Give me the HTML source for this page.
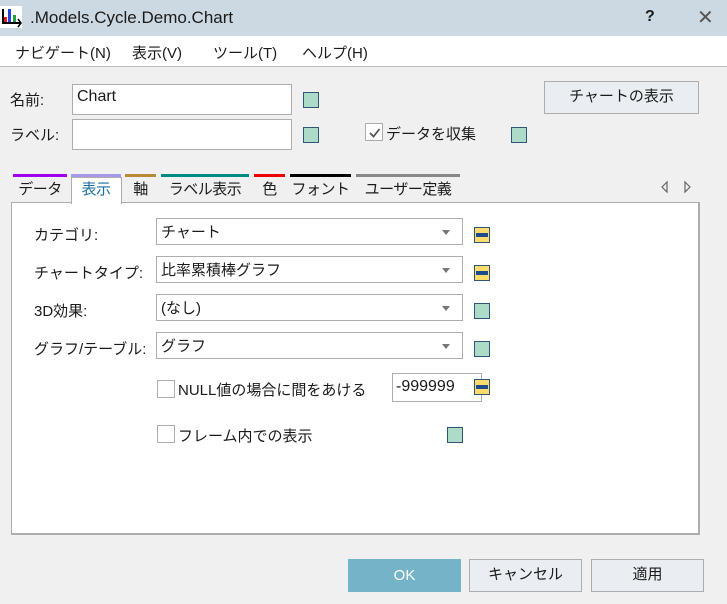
<!DOCTYPE html>
<html><head><meta charset="utf-8"><style>
*{margin:0;padding:0;box-sizing:border-box}
body{width:727px;height:604px;background:#f0f0f0;font-family:"Liberation Sans","Noto Sans CJK JP",sans-serif;font-size:15px;color:#1a1a1a;position:relative;overflow:hidden;white-space:nowrap}
.a{position:absolute}
.title{left:0;top:0;width:727px;height:36px;background:#cdd9e2}
.menu{left:0;top:36px;width:727px;height:31px;background:#fff;border-bottom:1px solid #bdbdbd}
.inp{background:#fff;border:1px solid #adadad}
.sq{width:16px;height:16px;background:#acdcc8;border:1px solid #2d5678}
.ysq{width:16px;height:16px;background:#fedc6c;border:1px solid #2d5678}
.ysq:after{content:"";position:absolute;left:1px;top:5px;width:12px;height:4px;background:#1f4a8c}
.cb{width:18px;height:18px;background:#fff;border:1px solid #adadad}
.btn{background:#eaeef2;border:1px solid #adadad;text-align:center;line-height:30px}
.combo{background:#fff;border:1px solid #adadad;height:27px;width:307px;left:156px;padding-left:4px;line-height:27px}
.combo:after{content:"";position:absolute;right:12px;top:11px;border-left:4px solid transparent;border-right:4px solid transparent;border-top:5px solid #777}
.bar{height:3px;top:174px}
.tab{top:178px;height:24px;line-height:24px;text-align:center;font-size:15px;letter-spacing:-0.5px}
.lbl{left:34px}
</style></head><body>
<div class="a title"></div>
<svg class="a" style="left:0;top:6px" width="24" height="22"><rect x="0" y="0" width="22" height="22" fill="#fff"/><rect x="2" y="3" width="2" height="14" fill="#000"/><rect x="4" y="11" width="3" height="6" fill="#e02020"/><rect x="8" y="3" width="3" height="14" fill="#2040e0"/><rect x="13" y="9" width="3" height="8" fill="#20a040"/><rect x="2" y="16" width="19" height="2" fill="#000"/><path d="M18 13 L21 17 L18 21" stroke="#000" fill="none" stroke-width="1.5"/></svg>
<div class="a" style="left:30px;top:8px;font-size:17px">.Models.Cycle.Demo.Chart</div>
<div class="a" style="left:645px;top:8px;font-size:16px;font-weight:bold">?</div>
<div class="a" style="left:697px;top:5px;font-size:20px;color:#555">✕</div>
<div class="a menu"></div>
<div class="a" style="left:15px;top:42px">ナビゲート(N)</div>
<div class="a" style="left:132px;top:42px">表示(V)</div>
<div class="a" style="left:213px;top:42px">ツール(T)</div>
<div class="a" style="left:302px;top:42px">ヘルプ(H)</div>

<div class="a" style="left:10px;top:89px">名前:</div>
<div class="a inp" style="left:72px;top:84px;width:220px;height:31px;padding:3px 4px;font-size:16px">Chart</div>
<div class="a sq" style="left:303px;top:92px"></div>
<div class="a" style="left:10px;top:124px">ラベル:</div>
<div class="a inp" style="left:72px;top:119px;width:220px;height:31px"></div>
<div class="a sq" style="left:303px;top:127px"></div>
<svg class="a cb" style="left:365px;top:123px" width="18" height="18"><path d="M4 9 L7.5 12.5 L13.5 5" stroke="#555" stroke-width="1.8" fill="none"/></svg>
<div class="a" style="left:386px;top:123px">データを収集</div>
<div class="a sq" style="left:511px;top:127px"></div>
<div class="a btn" style="left:544px;top:81px;width:155px;height:33px">チャートの表示</div>

<div class="a bar" style="left:13px;width:54px;background:#a000ee"></div>
<div class="a bar" style="left:71px;width:50px;background:#a898e8"></div>
<div class="a bar" style="left:125px;width:31px;background:#b88a38"></div>
<div class="a bar" style="left:161px;width:88px;background:#008a86"></div>
<div class="a bar" style="left:254px;width:31px;background:#ee0000"></div>
<div class="a bar" style="left:290px;width:61px;background:#000"></div>
<div class="a bar" style="left:356px;width:104px;background:#888"></div>
<div class="a" style="left:11px;top:202px;width:689px;height:333px;background:#fff;border:1px solid #adadad;border-right-width:2px;border-bottom-width:2px"></div>
<div class="a" style="left:71px;top:177px;width:51px;height:27px;background:#fff;border:1px solid #adadad;border-bottom:none"></div>
<div class="a tab" style="left:13px;width:54px">データ</div>
<div class="a tab" style="left:71px;width:50px;color:#1a6e9e">表示</div>
<div class="a tab" style="left:125px;width:31px">軸</div>
<div class="a tab" style="left:161px;width:88px">ラベル表示</div>
<div class="a tab" style="left:254px;width:31px">色</div>
<div class="a tab" style="left:290px;width:61px">フォント</div>
<div class="a tab" style="left:356px;width:104px">ユーザー定義</div>
<svg class="a" style="left:660px;top:180px" width="36" height="14"><path d="M7 2 L2 7 L7 12 Z M25 2 L30 7 L25 12 Z" fill="none" stroke="#666" stroke-width="1.2"/></svg>

<div class="a lbl" style="top:224px">カテゴリ:</div>
<div class="a lbl" style="top:262px">チャートタイプ:</div>
<div class="a lbl" style="top:300px">3D効果:</div>
<div class="a lbl" style="top:338px">グラフ/テーブル:</div>
<div class="a combo" style="top:218px">チャート</div>
<div class="a combo" style="top:256px">比率累積棒グラフ</div>
<div class="a combo" style="top:294px">(なし)</div>
<div class="a combo" style="top:332px">グラフ</div>
<div class="a ysq" style="left:474px;top:227px"></div>
<div class="a ysq" style="left:474px;top:265px"></div>
<div class="a sq" style="left:474px;top:303px"></div>
<div class="a sq" style="left:474px;top:341px"></div>
<div class="a cb" style="left:157px;top:380px"></div>
<div class="a" style="left:178px;top:379px">NULL値の場合に間をあける</div>
<div class="a inp" style="left:392px;top:373px;width:90px;height:29px;padding:4px 3px;font-size:16px">-999999</div>
<div class="a ysq" style="left:474px;top:379px"></div>
<div class="a cb" style="left:157px;top:425px"></div>
<div class="a" style="left:178px;top:425px">フレーム内での表示</div>
<div class="a sq" style="left:447px;top:427px"></div>

<div class="a" style="left:348px;top:559px;width:113px;height:33px;background:#74b3c8;color:#fff;text-align:center;line-height:33px">OK</div>
<div class="a btn" style="left:469px;top:559px;width:113px;height:33px">キャンセル</div>
<div class="a btn" style="left:591px;top:559px;width:113px;height:33px">適用</div>
</body></html>
